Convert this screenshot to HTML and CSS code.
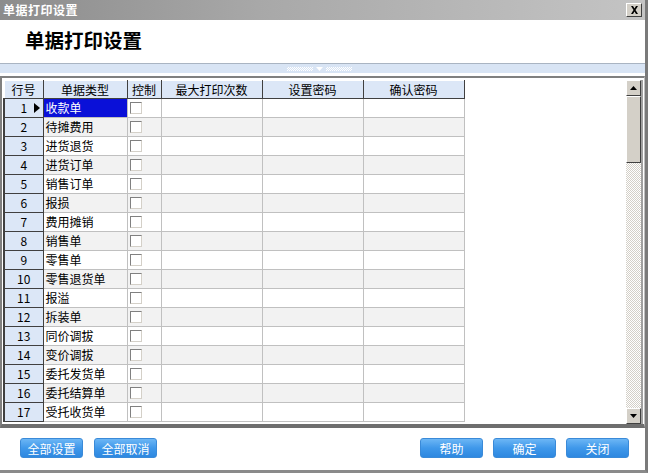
FILE: index.html
```html
<!DOCTYPE html>
<html lang="zh">
<head>
<meta charset="utf-8">
<title>单据打印设置</title>
<link rel="stylesheet" href="styles.css">
</head>
<body>
<div class="window">
  <div class="titlebar">
    <span class="title-text">单据打印设置</span>
    <span class="close-btn">
      <svg width="9" height="8" viewBox="0 0 9 8"><path d="M1 0h2l1.5 2.5L6 0h2L5.5 4 8 8H6L4.5 5.5 3 8H1l2.5-4z" fill="#000"/></svg>
    </span>
  </div>
  <div class="header">
    <h1 class="heading">单据打印设置</h1>
  </div>
  <div class="splitter">
    <span class="grip"></span>
    <svg class="grip-arrow" width="7" height="4" viewBox="0 0 7 4"><path d="M0 0h7L3.5 4z" fill="#fff"/></svg>
    <span class="grip"></span>
  </div>
  <div class="grid-frame">
    <div class="grid-area">
      <table class="grid">
        <colgroup>
          <col class="c-no"><col class="c-type"><col class="c-ctl"><col class="c-max"><col class="c-pw"><col class="c-pw2">
        </colgroup>
        <thead>
          <tr><th>行号</th><th>单据类型</th><th>控制</th><th>最大打印次数</th><th>设置密码</th><th>确认密码</th></tr>
        </thead>
        <tbody>
          <tr><td class="no"><span class="ind"></span>1</td><td class="sel">收款单</td><td><span class="chk"></span></td><td></td><td></td><td></td></tr>
          <tr class="alt"><td class="no">2</td><td>待摊费用</td><td><span class="chk"></span></td><td></td><td></td><td></td></tr>
          <tr><td class="no">3</td><td>进货退货</td><td><span class="chk"></span></td><td></td><td></td><td></td></tr>
          <tr class="alt"><td class="no">4</td><td>进货订单</td><td><span class="chk"></span></td><td></td><td></td><td></td></tr>
          <tr><td class="no">5</td><td>销售订单</td><td><span class="chk"></span></td><td></td><td></td><td></td></tr>
          <tr class="alt"><td class="no">6</td><td>报损</td><td><span class="chk"></span></td><td></td><td></td><td></td></tr>
          <tr><td class="no">7</td><td>费用摊销</td><td><span class="chk"></span></td><td></td><td></td><td></td></tr>
          <tr class="alt"><td class="no">8</td><td>销售单</td><td><span class="chk"></span></td><td></td><td></td><td></td></tr>
          <tr><td class="no">9</td><td>零售单</td><td><span class="chk"></span></td><td></td><td></td><td></td></tr>
          <tr class="alt"><td class="no">10</td><td>零售退货单</td><td><span class="chk"></span></td><td></td><td></td><td></td></tr>
          <tr><td class="no">11</td><td>报溢</td><td><span class="chk"></span></td><td></td><td></td><td></td></tr>
          <tr class="alt"><td class="no">12</td><td>拆装单</td><td><span class="chk"></span></td><td></td><td></td><td></td></tr>
          <tr><td class="no">13</td><td>同价调拔</td><td><span class="chk"></span></td><td></td><td></td><td></td></tr>
          <tr class="alt"><td class="no">14</td><td>变价调拔</td><td><span class="chk"></span></td><td></td><td></td><td></td></tr>
          <tr><td class="no">15</td><td>委托发货单</td><td><span class="chk"></span></td><td></td><td></td><td></td></tr>
          <tr class="alt"><td class="no">16</td><td>委托结算单</td><td><span class="chk"></span></td><td></td><td></td><td></td></tr>
          <tr><td class="no">17</td><td>受托收货单</td><td><span class="chk"></span></td><td></td><td></td><td></td></tr>
        </tbody>
      </table>
    </div>
    <div class="scrollbar">
      <div class="sb-btn">
        <svg width="7" height="4" viewBox="0 0 7 4"><path d="M3.5 0L7 4H0z" fill="#000"/></svg>
      </div>
      <div class="sb-thumb"></div>
      <div class="sb-track"></div>
      <div class="sb-btn">
        <svg width="7" height="4" viewBox="0 0 7 4"><path d="M0 0h7L3.5 4z" fill="#000"/></svg>
      </div>
    </div>
  </div>
  <div class="footer">
    <div class="btn-group">
      <span class="btn">全部设置</span>
      <span class="btn">全部取消</span>
    </div>
    <div class="btn-group right">
      <span class="btn">帮助</span>
      <span class="btn">确定</span>
      <span class="btn">关闭</span>
    </div>
  </div>
</div>
</body>
</html>
```
FILE: styles.css
```css
* { box-sizing: border-box; }
html, body {
  margin: 0;
  padding: 0;
  background: #fff;
}
body {
  width: 648px;
  height: 473px;
  overflow: hidden;
  font-family: "Noto Sans CJK SC", "Liberation Sans", sans-serif;
  font-size: 12px;
  color: #000;
}
.window {
  width: 648px;
  height: 473px;
  display: flex;
  flex-direction: column;
  border-right: 3px solid #7a7a7a;
  border-bottom: 3px solid #8a8a8a;
}
.titlebar {
  height: 20px;
  flex: none;
  display: flex;
  align-items: center;
  justify-content: space-between;
  padding: 0 3px 0 3px;
  background: linear-gradient(to right, #8c8c8c 0%, #a8a8a8 40%, #c4c4c4 100%);
}
.title-text {
  color: #fff;
  font-weight: bold;
  font-size: 12px;
  line-height: 20px;
  letter-spacing: 0.5px;
}
.close-btn {
  width: 16px;
  height: 14px;
  display: flex;
  align-items: center;
  justify-content: center;
  background: #d4d0c8;
  border-top: 1px solid #fff;
  border-left: 1px solid #fff;
  border-right: 1px solid #404040;
  border-bottom: 1px solid #404040;
}
.header {
  height: 43px;
  flex: none;
  display: flex;
  align-items: center;
  padding: 0 0 4px 25px;
  background: #fff;
}
.heading {
  margin: 0;
  font-size: 19.5px;
  font-weight: bold;
  line-height: 24px;
  color: #000;
}
.splitter {
  height: 10px;
  flex: none;
  display: flex;
  align-items: center;
  justify-content: center;
  gap: 3px;
  background: #d8e4f4;
  border-top: 1px solid #a9b4c2;
  padding-right: 6px;
}
.grip {
  width: 26px;
  height: 4px;
  background-image: repeating-conic-gradient(#fff 0% 25%, transparent 0% 50%);
  background-size: 2px 2px;
}
.grip-arrow { display: block; }
.grid-frame {
  height: 352px;
  flex: none;
  margin-top: 3px;
  display: flex;
  border-top: 2px solid #808080;
  border-left: 2px solid #808080;
  border-bottom: 4px solid #6e6e6e;
  border-right: 1px solid #c0c0c0;
  padding: 2px 1px 0 1px;
  background: #fff;
}
.grid-area {
  flex: 1;
  overflow: hidden;
}
.grid {
  border-collapse: collapse;
  table-layout: fixed;
  width: 460px;
}
.c-no { width: 39px; }
.c-type { width: 84px; }
.c-ctl { width: 34px; }
.c-max { width: 101px; }
.c-pw { width: 101px; }
.c-pw2 { width: 101px; }
.grid th {
  height: 18px;
  padding: 0;
  font-weight: normal;
  text-align: center;
  line-height: 16px;
  background: #dce7f7;
  border-top: 1px solid #fff;
  border-left: 1px solid #fff;
  border-right: 1px solid #404040;
  border-bottom: 1px solid #404040;
}
.grid td {
  height: 19px;
  padding: 0 0 0 2px;
  line-height: 18px;
  border: 1px solid #c0c0c0;
  white-space: nowrap;
  overflow: hidden;
}
.grid tr.alt td { background: #f2f2f2; }
.grid td.no {
  position: relative;
  text-align: center;
  padding: 0;
  background: #dce7f7;
  border-top: 1px solid #fff;
  border-left: 2px solid #404040;
  border-right: 1px solid #404040;
  border-bottom: 1px solid #404040;
}
.grid tr.alt td.no { background: #dce7f7; }
.ind {
  position: absolute;
  right: 3px;
  top: 4px;
  width: 0;
  height: 0;
  border-top: 5px solid transparent;
  border-bottom: 5px solid transparent;
  border-left: 6px solid #000;
}
.grid td.sel {
  background: #0a10d8;
  color: #fff;
}
.chk {
  display: block;
  width: 12px;
  height: 12px;
  background: #fff;
  border-top: 1px solid #808080;
  border-left: 1px solid #808080;
  border-right: 1px solid #d4d0c8;
  border-bottom: 1px solid #d4d0c8;
}
.scrollbar {
  width: 17px;
  flex: none;
  display: flex;
  flex-direction: column;
  border-right: 2px solid #a0a0a0;
  margin-right: 0;
}
.sb-btn {
  height: 16px;
  flex: none;
  display: flex;
  align-items: center;
  justify-content: center;
  background: #d4d0c8;
  border-top: 1px solid #fff;
  border-left: 1px solid #fff;
  border-right: 1px solid #404040;
  border-bottom: 1px solid #404040;
}
.sb-thumb {
  height: 67px;
  flex: none;
  background: #d4d0c8;
  border-top: 1px solid #fff;
  border-left: 1px solid #fff;
  border-right: 1px solid #404040;
  border-bottom: 1px solid #404040;
}
.sb-track {
  flex: 1;
  background-color: #fff;
  background-image: repeating-conic-gradient(#d4d0c8 0% 25%, #fff 0% 50%);
  background-size: 2px 2px;
}
.footer {
  flex: 1;
  display: flex;
  justify-content: space-between;
  align-items: center;
  padding: 0 16px 2px 20px;
  background: #fff;
}
.btn-group {
  display: flex;
  gap: 11px;
}
.btn-group.right { gap: 10px; }
.btn {
  width: 63px;
  height: 20px;
  display: flex;
  align-items: center;
  justify-content: center;
  color: #fff;
  font-size: 12px;
  border-radius: 3px;
  background: linear-gradient(to bottom, #6cb6f5 0%, #3f98ea 50%, #2e88e0 100%);
  border: 1px solid #3a8ad8;
}
```
